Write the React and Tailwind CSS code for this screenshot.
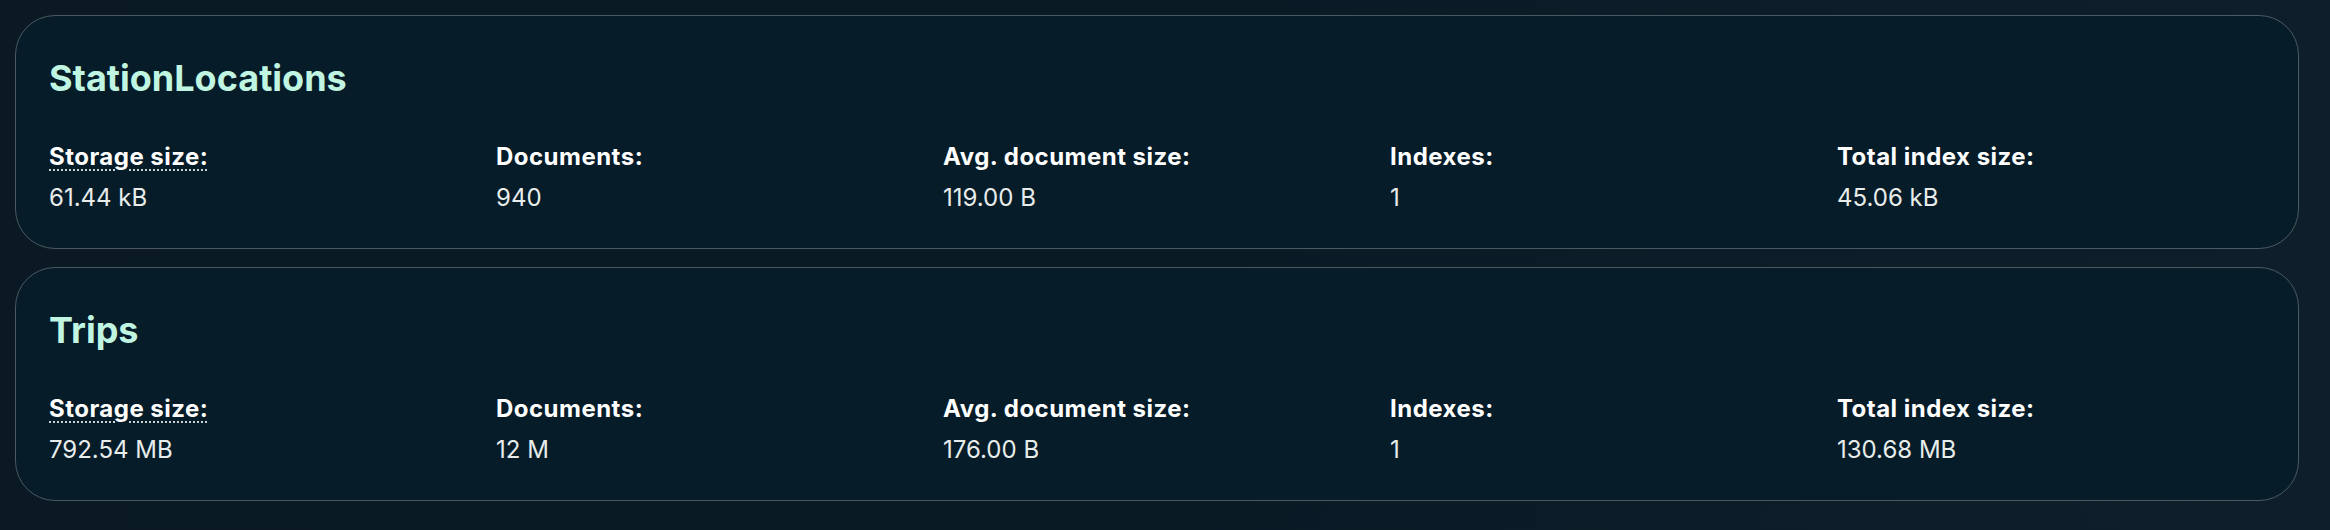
const collections = [
  {
    name: "StationLocations",
    storageSize: "61.44 kB",
    documents: "940",
    avgSize: "119.00 B",
    indexes: "1",
    indexSize: "45.06 kB",
  },
  {
    name: "Trips",
    storageSize: "792.54 MB",
    documents: "12 M",
    avgSize: "176.00 B",
    indexes: "1",
    indexSize: "130.68 MB",
  },
];

const Stat = ({ label, value, hint }) => (
  <div className="flex flex-col">
    <div className="h-[32px] leading-[32px] text-[24px] font-bold tracking-[0.02em] text-white">
      {hint ? (
        <span className="underline decoration-dotted decoration-2 underline-offset-[4px] decoration-[#c9d1d4]">
          {label}
        </span>
      ) : (
        label
      )}
    </div>
    <div className="mt-[9px] h-[32px] leading-[32px] text-[24px] text-[#e8edeb]">{value}</div>
  </div>
);

const CollectionCard = ({ c }) => (
  <div className="h-[234px] rounded-[40px] border-[1.5px] border-[#4b5961] bg-[#061c29] pl-[33px] pr-[33px] pt-[40px]">
    <h2 className="h-[44px] leading-[44px] text-[36px] font-bold text-[#c0f5e2]">{c.name}</h2>
    <div className="mt-[41px] grid grid-cols-5 gap-x-[19px]">
      <Stat label="Storage size:" value={c.storageSize} hint />
      <Stat label="Documents:" value={c.documents} />
      <Stat label="Avg. document size:" value={c.avgSize} />
      <Stat label="Indexes:" value={c.indexes} />
      <Stat label="Total index size:" value={c.indexSize} />
    </div>
  </div>
);

export default function App() {
  return (
    <div
      className="min-h-[530px] bg-gradient-to-r from-[#0a1923] via-[#0a1a25] to-[#0e1f2b] pl-[15px] pr-[31px] pt-[15px] flex flex-col gap-[18px]"
      style={{ fontFamily: "Inter, 'Noto Sans', sans-serif" }}
    >
      {collections.map((c) => (
        <CollectionCard key={c.name} c={c} />
      ))}
    </div>
  );
}
